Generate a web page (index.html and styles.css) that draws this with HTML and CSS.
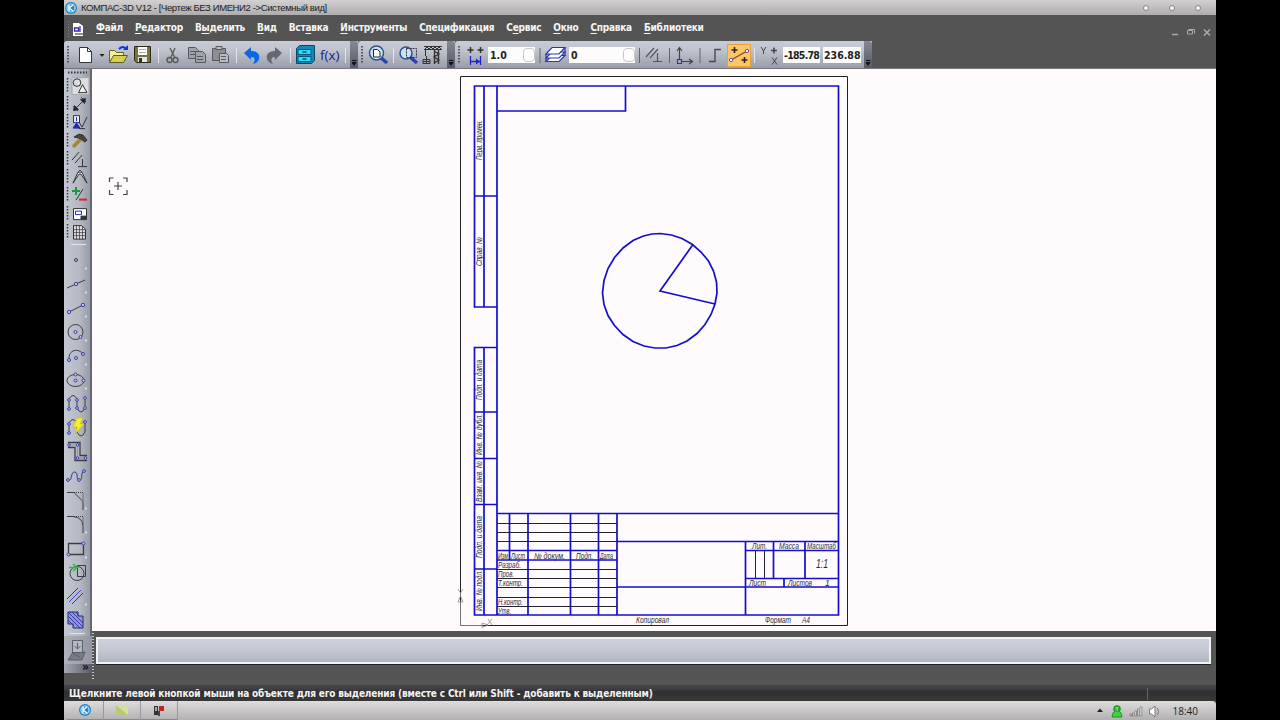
FILE: index.html
```html
<!DOCTYPE html>
<html lang="ru">
<head>
    <meta charset="UTF-8">
    <title>КОМПАС-3D V12</title>
    <link rel="stylesheet" href="styles.css">
</head>
<body>
<div class="app">
    <header class="titlebar">
        <svg width="14" height="14" viewBox="0 0 14 14"><circle cx="7" cy="7" r="6" fill="#2385cc"/><circle cx="7" cy="7" r="4" fill="none" stroke="#b9e3fa" stroke-width="1.2"/><path d="M5 4v6M9 4L5 7l4 3" fill="none" stroke="#fff" stroke-width="1.3"/></svg>
        <span class="title">КОМПАС-3D V12 - [Чертеж БЕЗ ИМЕНИ2 -&gt;Системный вид]</span>
        <div class="win-dots"><i></i><i></i><i></i></div>
    </header>

    <nav class="menubar">
        <svg width="20" height="26"><path d="M4.500 6v16" stroke="#888" stroke-dasharray="1 2"/><path d="M9 8h6l4 3v10H9z" fill="#fff"/><path d="M10.500 13h4v3h-4zM16 11v6" fill="none" stroke="#3a2fae" stroke-width="1.300"/><path d="M11 19h8" stroke="#222"/></svg>
        <div class="menu">
            <span><u>Ф</u>айл</span>
            <span><u>Р</u>едактор</span>
            <span>В<u>ы</u>делить</span>
            <span><u>В</u>ид</span>
            <span>Вст<u>а</u>вка</span>
            <span><u>И</u>нструменты</span>
            <span>С<u>п</u>ецификация</span>
            <span>С<u>е</u>рвис</span>
            <span><u>О</u>кно</span>
            <span><u>С</u>правка</span>
            <span><u>Б</u>иблиотеки</span>
        </div>
        <svg class="mdi" width="46" height="26" fill="none" stroke="#aaa"><path d="M2 19.500h6" stroke-width="1.500"/><path d="M17.500 19v-3.500h5v3.500zM18.500 14.500h6v4" /><path d="M34 14.500l6 6M40 14.500l-6 6" stroke-width="1.500"/></svg>
    </nav>

    <div class="toolbars">
        <div class="toolbar">
            <svg width="8" height="28"><path d="M4 5v18" class="grip"/></svg>
            <svg width="26" height="28"><path d="M7.500 6.500h8l4 4v11h-12z" fill="#fff" stroke="#34343c"/><path d="M15.500 6.500v4h4" fill="none" stroke="#34343c"/></svg>
            <svg width="8" height="28"><path d="M1.500 13h5l-2.500 3z" fill="#222"/></svg>
            <svg width="25" height="28"><path d="M3.500 20.500v-11h5l2 2h7v3" fill="#f5f0a2" stroke="#666421"/><path d="M3.500 21.500l4-7h14l-4 7z" fill="#d4cf4c" stroke="#5e5c1e"/><path d="M13 8q4-4 7 0" fill="none" stroke="#1735cc" stroke-width="2"/><path d="M17 9h5V4z" fill="#1735cc"/></svg>
            <svg width="23" height="28"><path d="M3.500 5.500h16v16h-14l-2-2z" fill="#77733c" stroke="#2d2b18"/><path d="M7 6h9v8H7z" fill="#fff"/><path d="M8 8.500h7M8 11.500h7" stroke="#aaa"/><path d="M7 16h9v5H7z" fill="#e6e6e6"/><path d="M8 17h3v4H8z" fill="#333"/></svg>
            <svg width="8" height="28"><path d="M4.500 7v15" class="sep"/></svg>
            <svg width="22" height="28" fill="none" stroke="#555" stroke-width="1.300"><path d="M8 7l4.500 9M13 7l-4 9"/><circle cx="7.500" cy="19" r="2.500"/><circle cx="13.500" cy="19" r="2.500"/></svg>
            <svg width="25" height="28" fill="#a0a3a9" stroke="#56585d"><path d="M4.500 6.500h7l3 3v8h-10z"/><path d="M6 10.500h6M6 13.500h5"/><path d="M11.500 10.500h7l3 3v8h-10z"/><path d="M13 15.500h6M13 18.500h6"/></svg>
            <svg width="23" height="28" fill="#8b8e94" stroke="#56585d"><path d="M3.500 7.500h13v12h-13z"/><path d="M7 5.500h6v3H7z" fill="#bbb"/><path d="M10.500 12.500h7l2 2v7h-9z" fill="#b8bbc1"/><path d="M12 15.500h5M12 18.500h5"/></svg>
            <svg width="8" height="28"><path d="M4.500 7v15" class="sep"/></svg>
            <svg width="23" height="28"><path d="M4 12l7-6v4c7 0 9 4 8 8-1 3-3 4-6 5 2-3 3-7-2-7v3z" fill="#0b68e4"/></svg>
            <svg width="23" height="28"><path d="M19 12l-7-6v4c-7 0-9 4-8 8 1 3 3 4 6 5-2-3-3-7 2-7v3z" fill="#65686d"/></svg>
            <svg width="8" height="28"><path d="M4.500 7v15" class="sep"/></svg>
            <svg width="23" height="28"><path d="M2.500 7.500l3-3h15v15l-3 3h-15z" fill="#1688b8" stroke="#064964"/><path d="M4 8.500h13v5H4zM4 15.500h13v5H4z" fill="#2ddafa" stroke="#045780"/><path d="M8.500 11h4M8.500 18h4" stroke="#044868" stroke-width="1.500"/></svg>
            <span class="fx">f(x)</span>
            <svg width="8" height="28"><path d="M3.500 7v15" class="sep"/></svg>
            <span class="cap"></span>
        </div>
        <div class="toolbar">
            <svg width="8" height="28"><path d="M4 5v18" class="grip"/></svg>
            <svg width="24" height="28"><path d="M14 16l7 6" stroke="#2d40b4" stroke-width="3.500"/><circle cx="10.500" cy="12" r="7" fill="#c5e5f7" stroke="#35518c" stroke-width="1.500"/><path d="M7.500 8.500h4l2.500 2.500v5h-6.500z" fill="#fff" stroke="#222"/></svg>
            <svg width="7" height="28"><path d="M3.500 7v15" class="sep"/></svg>
            <svg width="23" height="28"><path d="M13 16l7 6" stroke="#2d40b4" stroke-width="3.500"/><circle cx="9" cy="12" r="6" fill="#c5e5f7" stroke="#35518c" stroke-width="1.500"/><path d="M9.500 7.500h10v9h-10z" fill="none" stroke="#333" stroke-dasharray="2 1"/></svg>
            <svg width="27" height="28" fill="none" stroke="#333"><path d="M4 5.500h18M4 8.500h18M5 8l2-2 2 2 2-2 2 2 2-2 2 2 2-2 2 2"/><path d="M5.500 9v6M3 18.500h7v4H3zM6.500 15v7M3 20.500h7"/><path d="M14.500 8v15M18.500 8v15M14 10l5 3-5 3 5 3-5 3" stroke-width="1.400"/></svg>
            <span class="cap"></span>
        </div>
        <div class="toolbar">
            <svg width="8" height="28"><path d="M4 5v18" class="grip"/></svg>
            <svg width="25" height="28" fill="none"><path d="M7.500 6v6M4.500 9h6M17.500 6v6M14.500 9h6" stroke="#333" stroke-width="1.500"/><path d="M7.500 15v9M17.500 15v9M8 20.500h9" stroke="#2024cc" stroke-width="1.300"/><path d="M13 17.500v6l4-3z" fill="#2024cc"/></svg>
            <div class="field field-step">1.0<b></b></div>
            <svg width="9" height="28"><path d="M5 7v15" class="sep dark"/></svg>
            <svg width="25" height="28" fill="#fff" stroke="#2d35b8" stroke-width="1.200"><path d="M2 20.500l6-6h13l-6 6z"/><path d="M2 17l6-6h13l-6 6z"/><path d="M2 13l6-6.500h13L15 13z"/><path d="M2 13v8M21 7v8"/></svg>
            <div class="field field-layer">0<b></b></div>
            <svg width="9" height="28"><path d="M4.500 7v15" class="sep dark"/></svg>
            <svg width="21" height="28" fill="none" stroke="#55575c" stroke-width="1.200"><path d="M2 16l8-9M6 17l8-9M9 20.500h9M13.500 12v8"/></svg>
            <svg width="9" height="28"><path d="M4.500 7v15" class="sep dark"/></svg>
            <svg width="22" height="28" fill="none" stroke="#444" stroke-width="1.200"><path d="M5.500 18V7M3 10l2.500-3.500L8 10M8 20.500h10M15 18l3.500 2.500L15 23"/><path d="M3.500 18.500h4v4h-4z" stroke="#2732d0"/></svg>
            <svg width="9" height="28"><path d="M4 7v15" class="sep dark"/></svg>
            <svg width="21" height="28" fill="none" stroke="#484a50" stroke-width="1.400"><path d="M4 20.500h6v-12h6"/></svg>
            <svg width="26" height="28"><path d="M1.500 3.500h23v22h-23z" fill="#fbc766" stroke="#eaa13b"/><path d="M5 19L21 10" stroke="#87432b" stroke-width="1.300"/><path d="M8.500 6v6M5.500 9h6M18.500 16v6M15.500 19h6" stroke="#332614" stroke-width="1.600"/><circle cx="5" cy="19" r="1.700" fill="#fff" stroke="#7252a5"/><circle cx="21" cy="10" r="1.700" fill="#fff" stroke="#7252a5"/></svg>
            <svg width="5" height="28"><path d="M2.500 7v15" class="sep"/></svg>
            <svg width="26" height="28" fill="none" stroke="#44464a"><path d="M4 6l2.500 4L9 6M6.500 10v3M15 16.500l5 7M20 16.500l-5 7"/><path d="M17 6.500v6M14 9.500h6" stroke-width="1.600"/></svg>
            <div class="field field-x">-185.78</div>
            <div class="field field-y">236.88</div>
            <span class="cap"></span>
        </div>
    </div>

    <main class="workspace">
        <aside class="sidebar">
            <svg width="28" height="8"><path d="M4 3.500h19" class="grip-h"/></svg>
            <div class="panel-modes">
                <svg viewBox="0 0 28 18"><path d="M8 .5h17v17H8z" fill="#dcdee3" stroke="#a4a7ad"/><path d="M3.500 1v14" class="grip"/><circle cx="13" cy="5.500" r="3.800"/><path d="M14.500 15.500l4-8 4.500 8z" fill="#eee"/></svg>
                <svg viewBox="0 0 28 18"><path d="M3.500 1v14" class="grip"/><path d="M11 14l9-9M9 11l5 5M17 2l5 5"/><path d="M9.500 15.500l1-5 4 4zM21.500 3.500l-1 5-4-4z" fill="#222"/></svg>
                <svg viewBox="0 0 28 18"><path d="M3.500 1v14" class="grip"/><path d="M9.500 2.500h6v7h-6z" stroke="#2429a8" fill="#eee"/><path d="M12.500 4v4M9 15l3.500-5 3.500 5z" fill="#2429a8" stroke="#2429a8"/><path d="M15 9l3 5 5-10M15 15.500h6"/></svg>
                <svg viewBox="0 0 28 18"><path d="M3.500 1v14" class="grip"/><path d="M9 15l8-8" stroke="#a8842e" stroke-width="3.500"/><path d="M10 5l5-3 4 1 4 5-2 2-4-3-2-1z" fill="#444"/></svg>
                <svg viewBox="0 0 28 18"><path d="M3.500 1v14" class="grip"/><path d="M8 10l7-8M11 13l7-8M14 16.500h9M18.500 9v7"/></svg>
                <svg viewBox="0 0 28 18"><path d="M3.500 1v14" class="grip"/><path d="M9 15l5-11 2-2 2 2 5 11-6-9h-2z" fill="#eee"/><path d="M14 4h4"/></svg>
                <svg viewBox="0 0 28 18"><path d="M3.500 1v14" class="grip"/><path d="M12 1v8M8 5h8" stroke="#199b3d" stroke-width="2"/><path d="M12 14l7-11"/><path d="M15 13.500h8" stroke="#d92338" stroke-width="2"/></svg>
                <svg viewBox="0 0 28 18"><path d="M3.500 1v14" class="grip"/><path d="M9.500 3.500h13v11h-13z" fill="#fff"/><path d="M11.500 6h6v3.500h-6z" stroke="#2429b8"/><path d="M17 11h5v3h-5z" fill="#333"/></svg>
                <svg viewBox="0 0 28 18"><path d="M3.500 1v14" class="grip"/><path d="M9.500 2.500h8l4 3.500v10h-12z" fill="#ddd"/><path d="M9 6.500h12M9 9.500h12M9 12.500h12M12.500 3v13M15.500 3v13M18.500 4v12" stroke-width=".7"/></svg>
            </div>
            <svg width="28" height="7"><path d="M7 3.500h15" stroke="#e2e5ea"/></svg>
            <div class="panel-tools">
                <svg viewBox="0 0 28 24"><circle cx="12" cy="12" r="1.500"/><path d="M21 20.500h2" class="more"/></svg>
                <svg viewBox="0 0 28 24"><path d="M3 16l18-8"/><circle cx="12" cy="12" r="1.700" class="pt"/><path d="M21 20.500h2" class="more"/></svg>
                <svg viewBox="0 0 28 24"><path d="M5 16l14-7"/><circle cx="5" cy="16" r="1.700" class="pt"/><circle cx="19" cy="9" r="1.700" class="pt"/><path d="M21 20.500h2" class="more"/></svg>
                <svg viewBox="0 0 28 24"><circle cx="11.500" cy="12" r="7.500"/><circle cx="11.500" cy="12" r="1.500" class="pt"/><circle cx="16.500" cy="17" r="1.500" class="pt"/><path d="M21 20.500h2" class="more"/></svg>
                <svg viewBox="0 0 28 24"><path d="M5 16C4 5 15 4 19 10"/><circle cx="5" cy="16" r="1.500" class="pt"/><circle cx="12" cy="14" r="1.500" class="pt"/><circle cx="19" cy="10" r="1.500" class="pt"/><path d="M21 20.500h2" class="more"/></svg>
                <svg viewBox="0 0 28 24"><ellipse cx="11.500" cy="12.500" rx="8.500" ry="6"/><circle cx="11.500" cy="12.500" r="1.500" class="pt"/><circle cx="11.500" cy="6.500" r="1.500" class="pt"/><circle cx="19.500" cy="12.500" r="1.500" class="pt"/><path d="M21 20.500h2" class="more"/></svg>
                <svg viewBox="0 0 28 24"><path d="M5 17V7q4-7 8 0v9q4 8 8 0V6"/><g class="pt"><circle cx="5" cy="17" r="1.400"/><circle cx="5" cy="8" r="1.400"/><circle cx="13" cy="8" r="1.400"/><circle cx="13" cy="16" r="1.400"/><circle cx="21" cy="16" r="1.400"/><circle cx="21" cy="6" r="1.400"/></g></svg>
                <svg viewBox="0 0 28 24"><path d="M5 17V7q4-7 8 0v9q4 8 8 0V6"/><g class="pt"><circle cx="5" cy="17" r="1.400"/><circle cx="5" cy="8" r="1.400"/><circle cx="21" cy="6" r="1.400"/></g><path d="M13 2h6l-3 6h4l-9 10 2-7H9z" fill="#f6ef21" stroke="#c7bc20" stroke-width=".6"/></svg>
                <svg viewBox="0 0 28 24"><path d="M4 2.500h12v13h7M4 7.500h7v13h12" stroke-width="1.300"/><path d="M5 5h8.500v13H22" stroke="#777a85" stroke-width=".6"/><g class="pt"><circle cx="5" cy="5" r="1.300"/><circle cx="13.500" cy="5" r="1.300"/><circle cx="13.500" cy="18" r="1.300"/><circle cx="21.500" cy="18" r="1.300"/></g></svg>
                <svg viewBox="0 0 28 24"><path d="M4 16c5 2 2-9 7-8 4 1 0 8 5 8 3 0 0-7 4-9" stroke="#3538a0"/><g class="pt"><circle cx="4" cy="16" r="1.400"/><circle cx="15" cy="16" r="1.400"/><circle cx="20" cy="7" r="1.400"/></g></svg>
                <svg viewBox="0 0 28 24"><path d="M3 4.500h7l9 9V22"/><path d="M10 4.500h9v9" stroke-dasharray="1 1"/><path d="M21 20.500h2" class="more"/></svg>
                <svg viewBox="0 0 28 24"><path d="M3 4.500h6q10 1 10 10V21"/><path d="M10 4.500h9v9" stroke-dasharray="1 1"/><path d="M21 20.500h2" class="more"/></svg>
                <svg viewBox="0 0 28 24"><path d="M4.500 7.500h15v11h-15z" stroke-width="1.300"/><circle cx="4.500" cy="18.500" r="1.500" class="pt"/><circle cx="19.500" cy="7.500" r="1.500" class="pt"/><path d="M21 21.500h2" class="more"/></svg>
                <svg viewBox="0 0 28 24"><circle cx="13" cy="13.500" r="7"/><path d="M13.500 5.500h8v11h-8z"/><path d="M5 7.500h9M9 4l4 3.500L9 11" stroke="#22bd3c" stroke-width="1.500"/></svg>
                <svg viewBox="0 0 28 24"><path d="M3 15L14 4M8 20L19 9" /><path d="M5 18L17 6" stroke="#3c43ce"/><path d="M21 20.500h2" class="more"/></svg>
                <svg viewBox="0 0 28 24"><path d="M4 4h10v4h5v12H9v-4H4z" fill="#9296d4" stroke="#242866"/><path d="M4 8l12 12M4 4l15 15M8 4l11 11M4 12l6 6M12 4l3 4" stroke="#3539a8"/></svg>
            </div>
            <svg width="28" height="4"><path d="M6 1.500h15" stroke="#e2e5ea"/></svg>
            <svg class="fill-icon" width="28" height="28" fill="none" stroke="#5c6068"><path d="M4 24l5-8h12l-3 8z" fill="#777b83"/><path d="M8.500 4.500h10v12h-10z" fill="#b4b8c0"/><path d="M13.500 7v6M10.500 10l3 3 3-3"/><path d="M8 17l8 4"/></svg>
            <div class="side-cap">»</div>
        </aside>

        <section class="content">
            <svg class="canvas" viewBox="92 69 1124 562">
                <!-- лист А4 -->
                <path d="M460.500 76.500h387v549h-387z" class="sheet"/>
                <!-- основные линии рамки и штампа -->
                <path class="thick" d="M497 615V86h341.500v529H474.500V347.500H497M497 111h128.500V86M497 86h-22.500v221H497M484 86v221M474 196h23M484 347.500V615M474 412h23M474 458.500h23M474 504.500h23M474 569h23"/>
                <path class="thick" d="M497 513.500h341M497 550.500h120M497 560h120M509.500 513.500V560M528 513.500V615M570.500 513.500V615M598.500 513.500V615M617 513.500V615M617 541.500h221M617 587h221M745.500 541.500V615M745.500 550.500h92.500M745.500 578.500h92.500M773.500 541.500v37M805 541.500v37M784 578.500V587"/>
                <path class="thin" d="M497 523.500h120M497 532.500h120M497 541.500h120M497 569.500h120M497 578.500h120M497 587.500h120M497 597.500h120M497 606.500h120M755.500 551v27M764.500 551v27"/>
                <!-- окружность с двумя радиусами -->
                <path class="thick" d="M660 233.500L671.500 235 682 238.500 692.500 244.500 701 252 708.500 261 713.500 271 716.500 282 717 293 715 304 711 314.500 705 324.500 697 333.500 687 341 677 345.500 666 348 655 348 644 346 633 341.500 623 334.500 614.500 325.500 608 315.500 604 304.500 602.500 293 604 280.500 608 268.500 614.500 257.500 623 248 633 240.500 643.500 236 652 234z"/>
                <path class="thick" d="M693 244.500L660 291l55 13"/>
                <!-- боковые графы -->
                <g class="gost">
                    <text transform="translate(482 160) rotate(-90)" textLength="40" lengthAdjust="spacingAndGlyphs">Перв. примен.</text>
                    <text transform="translate(482 266) rotate(-90)" textLength="29" lengthAdjust="spacingAndGlyphs">Справ. №</text>
                    <text transform="translate(482 400) rotate(-90)" textLength="40" lengthAdjust="spacingAndGlyphs">Подп. и дата</text>
                    <text transform="translate(482 455) rotate(-90)" textLength="41" lengthAdjust="spacingAndGlyphs">Инв. № дубл.</text>
                    <text transform="translate(482 502) rotate(-90)" textLength="41" lengthAdjust="spacingAndGlyphs">Взам. инв. №</text>
                    <text transform="translate(482 558) rotate(-90)" textLength="42" lengthAdjust="spacingAndGlyphs">Подп. и дата</text>
                    <text transform="translate(482 611) rotate(-90)" textLength="41" lengthAdjust="spacingAndGlyphs">Инв. № подл.</text>
                </g>
                <!-- штамп -->
                <g class="gost">
                    <text x="498" y="558.500" textLength="10" lengthAdjust="spacingAndGlyphs">Изм</text>
                    <text x="511" y="558.500" textLength="14" lengthAdjust="spacingAndGlyphs">Лист</text>
                    <text x="534" y="558.500" textLength="31" lengthAdjust="spacingAndGlyphs">№ докум.</text>
                    <text x="576" y="558.500" textLength="17" lengthAdjust="spacingAndGlyphs">Подп.</text>
                    <text x="600" y="558.500" textLength="13" lengthAdjust="spacingAndGlyphs">Дата</text>
                    <text x="498" y="567.500" textLength="23" lengthAdjust="spacingAndGlyphs">Разраб.</text>
                    <text x="498" y="576.500" textLength="16" lengthAdjust="spacingAndGlyphs">Пров.</text>
                    <text x="498" y="585.500" textLength="25" lengthAdjust="spacingAndGlyphs">Т.контр.</text>
                    <text x="498" y="604.500" textLength="25" lengthAdjust="spacingAndGlyphs">Н.контр.</text>
                    <text x="498" y="613.500" textLength="13" lengthAdjust="spacingAndGlyphs">Утв.</text>
                    <text x="752" y="549" textLength="15" lengthAdjust="spacingAndGlyphs">Лит.</text>
                    <text x="779" y="549" textLength="20" lengthAdjust="spacingAndGlyphs">Масса</text>
                    <text x="807" y="549" textLength="29" lengthAdjust="spacingAndGlyphs">Масштаб</text>
                    <text x="749" y="585.500" textLength="17" lengthAdjust="spacingAndGlyphs">Лист</text>
                    <text x="788" y="585.500" textLength="24" lengthAdjust="spacingAndGlyphs">Листов</text>
                    <text x="825" y="585.500">1</text>
                    <text x="816" y="568" textLength="12" lengthAdjust="spacingAndGlyphs" class="scale">1:1</text>
                    <text x="636" y="622.500" textLength="33" lengthAdjust="spacingAndGlyphs">Копировал</text>
                    <text x="765" y="622.500" textLength="26" lengthAdjust="spacingAndGlyphs">Формат</text>
                    <text x="802" y="622.500" textLength="8" lengthAdjust="spacingAndGlyphs">A4</text>
                </g>
                <path class="axis" d="M460.500 625V602M458 602l2.500-6 2.500 6zM460 625.500h22M482 623l6 2-6 2.500zM458 589l2.500 4 2.500-4M460.500 593v3M488 619l4 6M492 619l-5 6"/>
                <!-- курсор -->
                <path class="cursor" d="M109.500 182v-4h4M123 178h4v4M127 190v4.500h-4M113.500 194.500h-4V190"/>
                <path class="cursor" d="M114 186h8M118 182v8"/>
            </svg>
            <div class="props">
                <i class="props-grip"></i>
                <div class="props-field"></div>
            </div>
        </section>
    </main>

    <div class="status"><span>Щелкните левой кнопкой мыши на объекте для его выделения (вместе с Ctrl или Shift - добавить к выделенным)</span></div>

    <footer class="taskbar">
        <div class="tasks">
            <div class="task"><svg width="14" height="14" viewBox="0 0 14 14"><circle cx="7" cy="7" r="6" fill="#2385cc"/><circle cx="7" cy="7" r="4" fill="none" stroke="#b9e3fa" stroke-width="1.200"/><path d="M5 4v6M9 4L5 7l4 3" fill="none" stroke="#fff" stroke-width="1.300"/></svg></div>
            <div class="task"><svg width="14" height="14"><path d="M1 2h12v11H5L1 10z" fill="#b9ca72"/><path d="M1 2l12 10V2z" fill="#d5dfa0"/></svg></div>
            <div class="task"><svg width="14" height="14"><path d="M2 3h4v9H2z" fill="#333"/><path d="M3 4h2v4H3z" fill="#aaa"/><path d="M7 3h5v5H7z" fill="#c22424"/><path d="M6 8h2v5H6z" fill="#444"/></svg></div>
        </div>
        <div class="tray">
            <svg width="10" height="19"><path d="M2 11l3-3.500L8 11z" fill="#222"/></svg>
            <svg width="14" height="19"><circle cx="7" cy="8" r="3" fill="#6be36b" stroke="#189b24" stroke-width="1.500"/><path d="M3 12l2-2h4l2 2 1 4H2z" fill="#40d046" stroke="#189b24"/><path d="M5.500 8h1M8 8h1" stroke="#064f10"/></svg>
            <svg width="14" height="19" fill="#fff" stroke="#777" stroke-width=".8"><path d="M1 13h1.500v2H1zM3.500 12H5v3H3.500zM6 10h1.500v5H6zM8.500 8H10v7H8.500zM11 6h1.800v9H11z"/></svg>
            <svg width="14" height="19" fill="#fff" stroke="#777"><path d="M1.500 8h2l3.500-3v11l-3.500-3h-2z"/><path d="M9.500 7q2 3.500 0 7" fill="none"/></svg>
            <span class="clock">18:40</span>
        </div>
    </footer>
</div>
</body>
</html>
```

FILE: styles.css
```css
* {
    box-sizing: border-box;
}
body {
    margin: 0;
    background: #000;
    font-family: "DejaVu Sans Condensed", "DejaVu Sans", sans-serif;
    font-stretch: condensed;
    overflow: hidden;
}
svg {
    display: block;
    flex: none;
}
.app {
    width: 1152px;
    height: 720px;
    margin: 0 auto;
    display: flex;
    flex-direction: column;
    background: #545454;
}

/* заголовок и меню */
.titlebar {
    height: 15px;
    display: flex;
    align-items: center;
    padding: 1px 15px 0 0;
    background: linear-gradient(#d2d0d0, #aeacac);
}
.title {
    margin-left: 3px;
    font: 9.500px/14px "Liberation Sans", Arial, sans-serif;
    letter-spacing: -.38px;
    color: #222;
    white-space: nowrap;
}
.win-dots {
    margin-left: auto;
    display: flex;
    gap: 20px;
}
.win-dots i {
    width: 6px;
    height: 6px;
    border-radius: 50%;
    background: #f5f5f5;
    border: 1px solid #858383;
}
.menubar {
    height: 26px;
    display: flex;
    align-items: center;
    background: #545454;
}
.menu {
    display: flex;
    gap: 12px;
    margin-left: 12px;
    font-size: 10px;
    letter-spacing: -.25px;
    font-weight: bold;
    line-height: 14px;
    color: #f4f4f4;
    white-space: nowrap;
}
.menu u {
    text-underline-offset: 2px;
}
.mdi {
    margin-left: auto;
}

/* панели инструментов */
.toolbars {
    height: 28px;
    display: flex;
    border-bottom: 1px solid #74767c;
}
.toolbar {
    display: flex;
    align-items: center;
    height: 27px;
    background: linear-gradient(#c9ccd5, #bfc3cd 35%, #abafb9 70%, #999da7);
    border-radius: 3px 0 0 0;
}
.toolbar svg {
    height: 28px;
}
.grip {
    fill: none;
    stroke: #33363c;
    stroke-width: 1.500;
    stroke-dasharray: 1.500 1.500;
}
.grip-h {
    stroke: #33363c;
    stroke-width: 2;
    stroke-dasharray: 1.500 1.500;
}
.sep {
    stroke: #e3e5ea;
}
.sep.dark {
    stroke: #62656c;
}
.fx {
    width: 25px;
    padding-left: 3px;
    font: 13.500px/26px "Open Sans", sans-serif;
    color: #20208c;
    white-space: nowrap;
}
.cap {
    width: 8px;
    height: 27px;
    display: flex;
    align-items: flex-end;
    justify-content: center;
    padding-bottom: 2px;
    background: linear-gradient(#858993, #575b65);
    border-radius: 0 3px 0 0;
}
.cap::after {
    content: "";
    width: 5px;
    height: 5px;
    border-top: 1px solid #111;
    background: linear-gradient(#0000 1px, #111 1px);
    clip-path: polygon(0 0, 100% 0, 100% 40%, 50% 100%, 0 40%);
}
.field {
    height: 16px;
    display: flex;
    align-items: center;
    justify-content: space-between;
    background: #fdfbfc;
    font-size: 10.500px;
    font-weight: bold;
    color: #222;
    white-space: nowrap;
    padding-left: 2px;
}
.field b {
    width: 12px;
    height: 14px;
    border: 1px solid #c7c7cb;
    border-radius: 4px;
    background: #fff;
}
.field-step {
    width: 47px;
}
.field-layer {
    width: 66px;
}
.field-x {
    width: 37px;
    margin-right: 3px;
    padding-left: 1px;
    letter-spacing: -.75px;
}
.field-y {
    width: 38px;
    margin-right: 3px;
    padding-left: 1px;
}

/* рабочая область */
.workspace {
    height: 616px;
    display: flex;
}
.sidebar {
    width: 28px;
    height: 604px;
    background: linear-gradient(90deg, #c3c7d0, #b5b9c3 55%, #989ca6 92%, #646872 93%);
}
.panel-modes svg {
    width: 28px;
    height: 18.220px;
    fill: none;
    stroke: #333;
}
.panel-tools svg {
    width: 28px;
    height: 24px;
    fill: none;
    stroke: #3c3e45;
}
.panel-tools .pt {
    stroke: #3a3fb0;
    fill: #c5c9e4;
}
.panel-tools .more {
    stroke: #d9dce2;
    stroke-width: 2;
}
.fill-icon {
    background: linear-gradient(90deg, #aeb2bb, #9296a0);
}
.side-cap {
    height: 9px;
    padding-right: 3px;
    font-size: 12px;
    line-height: 7px;
    text-align: right;
    font-weight: bold;
    color: #111;
    background: linear-gradient(90deg, #a4a8b2, #585c66);
}
.content {
    width: 1124px;
}
.canvas {
    width: 1124px;
    height: 562px;
    background: #fffbfc;
}
.sheet {
    fill: none;
    stroke: #222;
}
.thick {
    fill: none;
    stroke: #150cd0;
    stroke-width: 1.700;
}
.thin {
    fill: none;
    stroke: #24202e;
}
.gost {
    font: italic 8.500px "Liberation Sans", Arial, sans-serif;
    fill: #2c2c34;
}
.gost .scale {
    font-size: 13px;
}
.axis {
    fill: none;
    stroke: #8b8b8b;
    stroke-width: .8;
}
.cursor {
    fill: none;
    stroke: #444;
    stroke-width: 1.200;
}

/* панель свойств */
.props {
    height: 54px;
    display: flex;
    padding-top: 2px;
    background: #545454;
}
.props-grip {
    width: 2px;
    height: 48px;
    background: repeating-linear-gradient(#c8c8c8 0 1px, #545454 1px 3px);
}
.props-field {
    width: 1115px;
    height: 27px;
    margin: 4px 0 0 2px;
    border: 2px solid #f2f2f5;
    background: linear-gradient(#cdd1dc, #c4c8d3 50%, #b0b4bf);
    box-shadow: 0 1px 0 #222;
}
.status {
    height: 16px;
    padding-left: 5px;
    font-size: 10px;
    letter-spacing: -.16px;
    font-weight: bold;
    line-height: 17px;
    color: #f4f4f4;
    white-space: nowrap;
    background: linear-gradient(#44444a, #3c3c42 30%, #303030 40%, #383838);
    display: flex;
}
.status::after {
    content: "";
    width: 1px;
    height: 12px;
    margin: 3px 68px 0 auto;
    background: #666;
}

/* панель задач */
.taskbar {
    height: 19px;
    display: flex;
    justify-content: space-between;
    background: linear-gradient(#dedcdc, #c8c6c6 50%, #b2b0b0);
    border-top-right-radius: 4px;
}
.tasks {
    display: flex;
    padding-left: 3px;
}
.task {
    width: 37px;
    display: flex;
    align-items: center;
    justify-content: center;
    border-right: 1px solid #999;
    border-bottom: 1px solid #62a864;
}
.tray {
    display: flex;
    gap: 5px;
    padding-right: 18px;
}
.clock {
    margin-left: 6px;
    font: 10px/20px "Open Sans", sans-serif;
    color: #222;
}
```
